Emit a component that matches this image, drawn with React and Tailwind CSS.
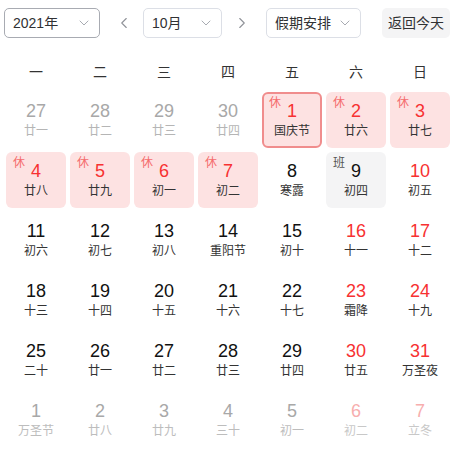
import { ChevronDown, ChevronLeft, ChevronRight } from "lucide-react";

const font = { fontFamily: '"Liberation Sans", "Noto Sans CJK SC", sans-serif' };

const weekdays = ["一", "二", "三", "四", "五", "六", "日"];

// t: prev | next ; tag: 休 | 班
const days = [
  { n: 27, l: "廿一", t: "prev" },
  { n: 28, l: "廿二", t: "prev" },
  { n: 29, l: "廿三", t: "prev" },
  { n: 30, l: "廿四", t: "prev" },
  { n: 1, l: "国庆节", tag: "休", sel: true },
  { n: 2, l: "廿六", tag: "休" },
  { n: 3, l: "廿七", tag: "休" },
  { n: 4, l: "廿八", tag: "休" },
  { n: 5, l: "廿九", tag: "休" },
  { n: 6, l: "初一", tag: "休" },
  { n: 7, l: "初二", tag: "休" },
  { n: 8, l: "寒露" },
  { n: 9, l: "初四", tag: "班" },
  { n: 10, l: "初五", red: true },
  { n: 11, l: "初六" },
  { n: 12, l: "初七" },
  { n: 13, l: "初八" },
  { n: 14, l: "重阳节" },
  { n: 15, l: "初十" },
  { n: 16, l: "十一", red: true },
  { n: 17, l: "十二", red: true },
  { n: 18, l: "十三" },
  { n: 19, l: "十四" },
  { n: 20, l: "十五" },
  { n: 21, l: "十六" },
  { n: 22, l: "十七" },
  { n: 23, l: "霜降", red: true },
  { n: 24, l: "十九", red: true },
  { n: 25, l: "二十" },
  { n: 26, l: "廿一" },
  { n: 27, l: "廿二" },
  { n: 28, l: "廿三" },
  { n: 29, l: "廿四" },
  { n: 30, l: "廿五", red: true },
  { n: 31, l: "万圣夜", red: true },
  { n: 1, l: "万圣节", t: "next" },
  { n: 2, l: "廿八", t: "next" },
  { n: 3, l: "廿九", t: "next" },
  { n: 4, l: "三十", t: "next" },
  { n: 5, l: "初一", t: "next" },
  { n: 6, l: "初二", t: "next", red: true },
  { n: 7, l: "立冬", t: "next", red: true },
];

function Select({ label, width, dark }) {
  return (
    <div
      className={`flex h-[30px] items-center justify-between rounded-[5px] border bg-white pl-[8px] pr-[7px] text-[14px] text-[#303133] ${width} ${
        dark ? "border-[#a8abb2]" : "border-[#dcdfe6]"
      }`}
    >
      <span>{label}</span>
      <ChevronDown size={16} strokeWidth={1.5} className="text-[#a8abb2]" />
    </div>
  );
}

function Day({ d }) {
  const off = d.t === "prev" || d.t === "next";
  let bg = "";
  if (d.tag === "休") bg = "bg-[#fde2e2]";
  if (d.tag === "班") bg = "bg-[#f4f4f5]";
  const border = d.sel ? "border-2 border-[#f08d8d]" : "";

  let numColor = "text-[#111]";
  if (d.tag === "休" || d.red) numColor = "text-[#f73131]";
  if (off) numColor = d.red ? "text-[#f7aeae]" : "text-[#a8a8a8]";
  let lunarColor = off ? (d.red ? "text-[#c8c8c8]" : "text-[#bdbdbd]") : "text-[#333]";
  if (d.t === "prev") lunarColor = "text-[#b5b5b5]";

  return (
    <div className={`relative flex h-[56px] flex-col items-center justify-center rounded-[6px] pt-[1px] ${bg} ${border}`}>
      {d.tag && (
        <span
          className={`absolute text-[12px] leading-[12px] ${d.sel ? "left-[5px] top-[3px]" : "left-[7px] top-[5px]"} ${
            d.tag === "休" ? "text-[#f56c6c]" : "text-[#555]"
          }`}
        >
          {d.tag}
        </span>
      )}
      <span className={`text-[18px] leading-[20px] ${numColor}`}>{d.n}</span>
      <span className={`mt-[1px] text-[12px] leading-[18px] ${lunarColor}`}>{d.l}</span>
    </div>
  );
}

export default function App() {
  return (
    <div className="h-[450px] w-[458px] bg-white" style={font}>
      <div className="flex items-center pl-[4px] pt-[8px]">
        <Select label="2021年" width="w-[96px]" dark />
        <ChevronLeft size={18} strokeWidth={1.5} className="ml-[15px] text-[#909399]" />
        <div className="ml-[10px]">
          <Select label="10月" width="w-[79px]" />
        </div>
        <ChevronRight size={18} strokeWidth={1.5} className="ml-[11px] text-[#909399]" />
        <div className="ml-[15px]">
          <Select label="假期安排" width="w-[95px]" />
        </div>
        <button className="ml-[21px] flex h-[30px] w-[68px] items-center justify-center rounded-[5px] bg-[#f4f4f5] text-[14px] text-[#303133]">
          返回今天
        </button>
      </div>
      <div className="ml-[6px] mt-[18px] w-[444px]">
        <div className="grid h-[32px] grid-cols-7 gap-x-[4px]">
          {weekdays.map((w) => (
            <div key={w} className="flex items-center justify-center text-[14px] text-[#333]">
              {w}
            </div>
          ))}
        </div>
        <div className="mt-[4px] grid grid-cols-7 gap-[4px]">
          {days.map((d, i) => (
            <Day key={i} d={d} />
          ))}
        </div>
      </div>
    </div>
  );
}
